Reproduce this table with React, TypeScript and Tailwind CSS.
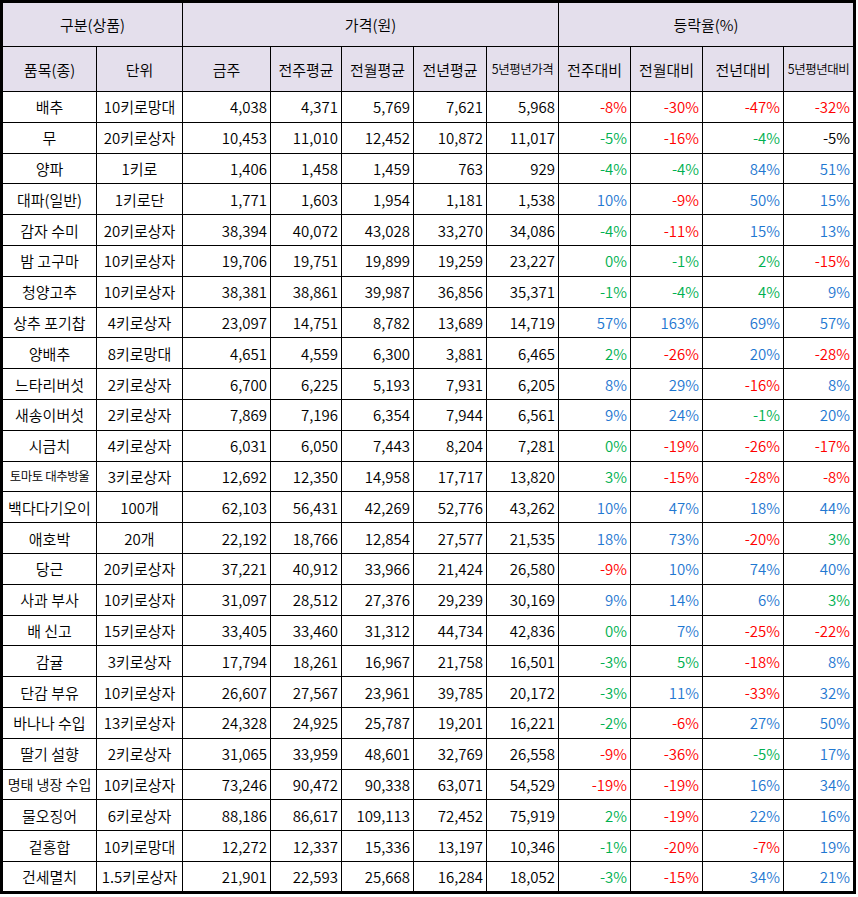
type Tone = "r" | "g" | "b" | "k"

interface Row {
  name: string
  unit: string
  prices: string[]
  rates: [string, Tone][]
}

const raw: string[] = [
  "배추|10키로망대|4,038|4,371|5,769|7,621|5,968|-8%:r|-30%:r|-47%:r|-32%:r",
  "무|20키로상자|10,453|11,010|12,452|10,872|11,017|-5%:g|-16%:r|-4%:g|-5%:k",
  "양파|1키로|1,406|1,458|1,459|763|929|-4%:g|-4%:g|84%:b|51%:b",
  "대파(일반)|1키로단|1,771|1,603|1,954|1,181|1,538|10%:b|-9%:r|50%:b|15%:b",
  "감자 수미|20키로상자|38,394|40,072|43,028|33,270|34,086|-4%:g|-11%:r|15%:b|13%:b",
  "밤 고구마|10키로상자|19,706|19,751|19,899|19,259|23,227|0%:g|-1%:g|2%:g|-15%:r",
  "청양고추|10키로상자|38,381|38,861|39,987|36,856|35,371|-1%:g|-4%:g|4%:g|9%:b",
  "상추 포기찹|4키로상자|23,097|14,751|8,782|13,689|14,719|57%:b|163%:b|69%:b|57%:b",
  "양배추|8키로망대|4,651|4,559|6,300|3,881|6,465|2%:g|-26%:r|20%:b|-28%:r",
  "느타리버섯|2키로상자|6,700|6,225|5,193|7,931|6,205|8%:b|29%:b|-16%:r|8%:b",
  "새송이버섯|2키로상자|7,869|7,196|6,354|7,944|6,561|9%:b|24%:b|-1%:g|20%:b",
  "시금치|4키로상자|6,031|6,050|7,443|8,204|7,281|0%:g|-19%:r|-26%:r|-17%:r",
  "토마토 대추방울|3키로상자|12,692|12,350|14,958|17,717|13,820|3%:g|-15%:r|-28%:r|-8%:r",
  "백다다기오이|100개|62,103|56,431|42,269|52,776|43,262|10%:b|47%:b|18%:b|44%:b",
  "애호박|20개|22,192|18,766|12,854|27,577|21,535|18%:b|73%:b|-20%:r|3%:g",
  "당근|20키로상자|37,221|40,912|33,966|21,424|26,580|-9%:r|10%:b|74%:b|40%:b",
  "사과 부사|10키로상자|31,097|28,512|27,376|29,239|30,169|9%:b|14%:b|6%:b|3%:g",
  "배 신고|15키로상자|33,405|33,460|31,312|44,734|42,836|0%:g|7%:b|-25%:r|-22%:r",
  "감귤|3키로상자|17,794|18,261|16,967|21,758|16,501|-3%:g|5%:g|-18%:r|8%:b",
  "단감 부유|10키로상자|26,607|27,567|23,961|39,785|20,172|-3%:g|11%:b|-33%:r|32%:b",
  "바나나 수입|13키로상자|24,328|24,925|25,787|19,201|16,221|-2%:g|-6%:r|27%:b|50%:b",
  "딸기 설향|2키로상자|31,065|33,959|48,601|32,769|26,558|-9%:r|-36%:r|-5%:g|17%:b",
  "명태 냉장 수입|10키로상자|73,246|90,472|90,338|63,071|54,529|-19%:r|-19%:r|16%:b|34%:b",
  "물오징어|6키로상자|88,186|86,617|109,113|72,452|75,919|2%:g|-19%:r|22%:b|16%:b",
  "겉홍합|10키로망대|12,272|12,337|15,336|13,197|10,346|-1%:g|-20%:r|-7%:r|19%:b",
  "건세멸치|1.5키로상자|21,901|22,593|25,668|16,284|18,052|-3%:g|-15%:r|34%:b|21%:b",
]

const rows: Row[] = raw.map((line) => {
  const p = line.split("|")
  return {
    name: p[0],
    unit: p[1],
    prices: p.slice(2, 7),
    rates: p.slice(7).map((c) => {
      const [v, t] = c.split(":")
      return [v, t as Tone]
    }),
  }
})

const toneClass: Record<Tone, string> = {
  r: "text-[#ff0000]",
  g: "text-[#00b050]",
  b: "text-[#1f78d1]",
  k: "text-black",
}

const cell = "border border-black px-[3px] whitespace-nowrap overflow-hidden"
const small = "text-[12.5px] tracking-[-0.5px] px-0"

export default function App() {
  return (
    <div className="w-[858px] h-[897px] bg-white">
      <table
        className="table-fixed border-collapse border-[3px] border-black text-[15px] leading-none font-[350] text-black"
        style={{ fontFamily: '"Malgun Gothic", "Noto Sans CJK KR", "Noto Sans", sans-serif' }}
      >
        <colgroup>
          <col className="w-[95px]" />
          <col className="w-[86px]" />
          <col className="w-[88px]" />
          <col className="w-[71px]" />
          <col className="w-[72px]" />
          <col className="w-[73px]" />
          <col className="w-[72px]" />
          <col className="w-[72px]" />
          <col className="w-[72px]" />
          <col className="w-[81px]" />
          <col className="w-[71px]" />
        </colgroup>
        <thead className="bg-[#e4dfec]">
          <tr className="h-[45px]">
            <th colSpan={2} className={`${cell} font-[350] text-center`}>
              구분(상품)
            </th>
            <th colSpan={5} className={`${cell} font-[350] text-center`}>
              가격(원)
            </th>
            <th colSpan={4} className={`${cell} font-[350] text-center`}>
              등락율(%)
            </th>
          </tr>
          <tr className="h-[45px]">
            <th className={`${cell} font-[350] text-center`}>품목(종)</th>
            <th className={`${cell} font-[350] text-center`}>단위</th>
            <th className={`${cell} font-[350] text-center`}>금주</th>
            <th className={`${cell} font-[350] text-center`}>전주평균</th>
            <th className={`${cell} font-[350] text-center`}>전월평균</th>
            <th className={`${cell} font-[350] text-center`}>전년평균</th>
            <th className={`${cell} font-[350] text-center ${small}`}>5년평년가격</th>
            <th className={`${cell} font-[350] text-center`}>전주대비</th>
            <th className={`${cell} font-[350] text-center`}>전월대비</th>
            <th className={`${cell} font-[350] text-center`}>전년대비</th>
            <th className={`${cell} font-[350] text-center ${small}`}>5년평년대비</th>
          </tr>
        </thead>
        <tbody>
          {rows.map((row, index) => (
            <tr key={index} className="h-[30.8px]">
              <td
                className={`${cell} text-center ${
                  row.name === "토마토 대추방울" ? small : row.name === "명태 냉장 수입" ? "text-[14px] px-0" : ""
                }`}
              >
                {row.name}
              </td>
              <td className={`${cell} text-center`}>{row.unit}</td>
              {row.prices.map((price, i) => (
                <td key={i} className={`${cell} text-right`}>
                  {price}
                </td>
              ))}
              {row.rates.map(([value, tone], i) => (
                <td key={i} className={`${cell} text-right ${toneClass[tone]}`}>
                  {value}
                </td>
              ))}
            </tr>
          ))}
        </tbody>
      </table>
    </div>
  )
}
